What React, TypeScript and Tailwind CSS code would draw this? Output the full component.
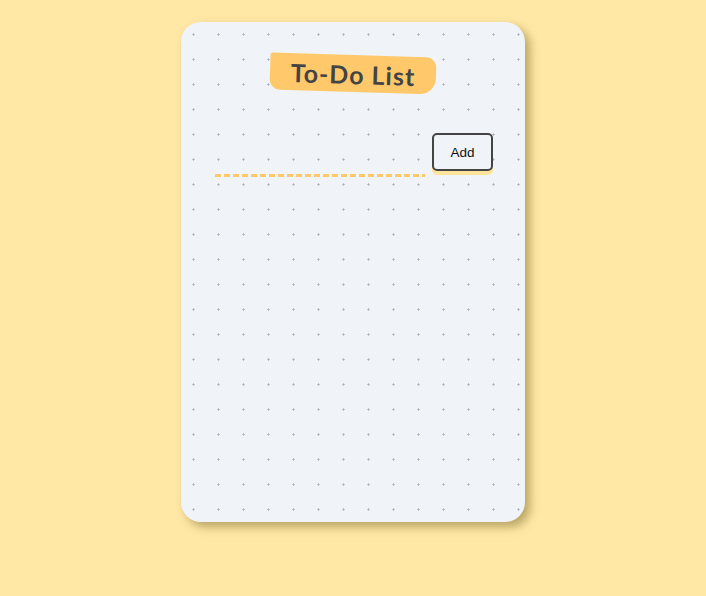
import React from "react";

export default function App() {
  return (
    <div className="min-h-[596px] w-full bg-[#ffe8a5] pt-[22px]">
      <div className="relative mx-auto h-[500px] w-[344px] overflow-hidden rounded-[20px] bg-[#f0f4f8] shadow-[5px_5px_10px_rgba(120,100,40,0.5)]">
        <svg className="absolute inset-0 h-full w-full" aria-hidden="true">
          <defs>
            <pattern id="plus" width="25" height="25" patternUnits="userSpaceOnUse">
              <rect x="11" y="12" width="3" height="1" fill="#c2c5ca" />
              <rect x="12" y="11" width="1" height="3" fill="#c2c5ca" />
              <rect x="12" y="12" width="1" height="1" fill="#aeb2b8" />
            </pattern>
          </defs>
          <rect width="100%" height="100%" fill="url(#plus)" />
        </svg>
        <div className="relative flex flex-col px-[32px] pt-[33px]">
          <div className="flex justify-center">
            <h1
              className="flex h-[37px] w-[166px] rotate-[1.8deg] items-center justify-center rounded-[2px_10px_16px_10px] bg-[#ffc96b] pt-[2px] text-[25px] font-bold leading-none tracking-[1px] text-[#444]"
              style={{ fontFamily: '"Comic Sans MS", "Lato", "Noto Sans", sans-serif' }}
            >
              To-Do List
            </h1>
          </div>
          <div className="mt-[41px] flex items-start gap-[7px]">
            <input
              className="ml-[2px] h-[44px] w-[210px] bg-transparent bg-[repeating-linear-gradient(90deg,#ffc96b_0_6px,transparent_6px_9px)] bg-[length:100%_3px] bg-bottom bg-no-repeat outline-none"
              aria-label="New task"
            />
            <button
              className="h-[38px] w-[61px] rounded-[5px] border-2 border-[#444] bg-[#f0f4f8] pt-[3px] text-[13.5px] text-[#111] shadow-[0_4px_0_#ffe49c]"
              style={{ fontFamily: '"Liberation Sans", Arial, sans-serif' }}
            >
              Add
            </button>
          </div>
        </div>
      </div>
    </div>
  );
}
